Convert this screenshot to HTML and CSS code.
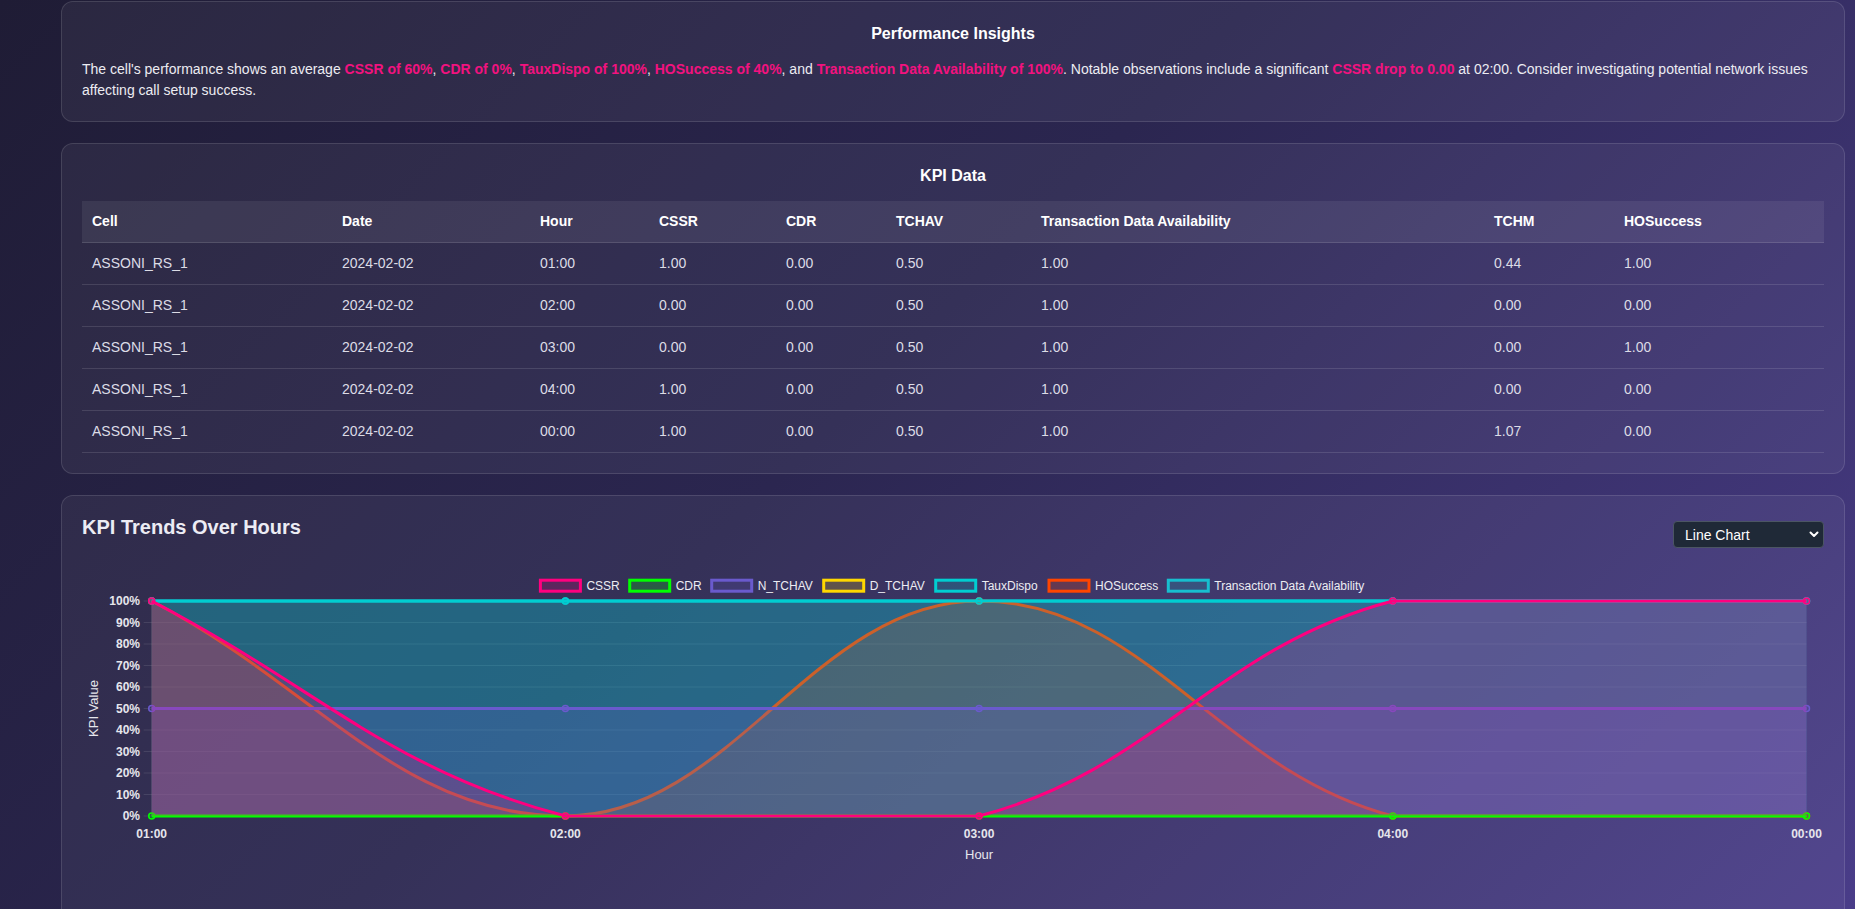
FILE: index.html
```html
<!DOCTYPE html>
<html lang="en">
<head>
<meta charset="utf-8">
<title>KPI Dashboard</title>
<link rel="stylesheet" href="styles.css">
</head>
<body>
<main class="page">
  <section class="card">
    <h3 class="card-title">Performance Insights</h3>
    <p class="insight-text">The cell's performance shows an average <span class="hl">CSSR of 60%</span>, <span class="hl">CDR of 0%</span>, <span class="hl">TauxDispo of 100%</span>, <span class="hl">HOSuccess of 40%</span>, and <span class="hl">Transaction Data Availability of 100%</span>. Notable observations include a significant <span class="hl">CSSR drop to 0.00</span> at 02:00. Consider investigating potential network issues affecting call setup success.</p>
  </section>

  <section class="card">
    <h3 class="card-title">KPI Data</h3>
    <table class="kpi-table">
      <colgroup>
        <col class="c-cell"><col class="c-date"><col class="c-hour"><col class="c-cssr"><col class="c-cdr"><col class="c-tchav"><col class="c-tda"><col class="c-tchm"><col class="c-ho">
      </colgroup>
      <thead>
        <tr><th>Cell</th><th>Date</th><th>Hour</th><th>CSSR</th><th>CDR</th><th>TCHAV</th><th>Transaction Data Availability</th><th>TCHM</th><th>HOSuccess</th></tr>
      </thead>
      <tbody>
        <tr><td>ASSONI_RS_1</td><td>2024-02-02</td><td>01:00</td><td>1.00</td><td>0.00</td><td>0.50</td><td>1.00</td><td>0.44</td><td>1.00</td></tr>
        <tr><td>ASSONI_RS_1</td><td>2024-02-02</td><td>02:00</td><td>0.00</td><td>0.00</td><td>0.50</td><td>1.00</td><td>0.00</td><td>0.00</td></tr>
        <tr><td>ASSONI_RS_1</td><td>2024-02-02</td><td>03:00</td><td>0.00</td><td>0.00</td><td>0.50</td><td>1.00</td><td>0.00</td><td>1.00</td></tr>
        <tr><td>ASSONI_RS_1</td><td>2024-02-02</td><td>04:00</td><td>1.00</td><td>0.00</td><td>0.50</td><td>1.00</td><td>0.00</td><td>0.00</td></tr>
        <tr><td>ASSONI_RS_1</td><td>2024-02-02</td><td>00:00</td><td>1.00</td><td>0.00</td><td>0.50</td><td>1.00</td><td>1.07</td><td>0.00</td></tr>
      </tbody>
    </table>
  </section>

  <section class="card chart-card">
    <div class="chart-header">
      <h2 class="chart-title">KPI Trends Over Hours</h2>
      <div class="select-wrap">
        <select class="chart-select"><option>Line Chart</option><option>Bar Chart</option></select>
        <svg class="select-arrow" width="10" height="7" viewBox="0 0 10 7"><path d="M1.5 1.5 L5 5 L8.5 1.5" fill="none" stroke="#ffffff" stroke-width="2" stroke-linecap="round" stroke-linejoin="round"/></svg>
      </div>
    </div>
    <div class="chart-wrap">
      <svg class="chart" width="1742" height="330" viewBox="0 0 1742 330">
        <g class="legend">
          <rect x="458.4" y="12.2" width="40" height="11" fill="rgba(255,0,127,0.2)" stroke="#ff007f" stroke-width="3"/>
          <text x="504.4" y="22.3">CSSR</text>
          <rect x="547.7" y="12.2" width="40" height="11" fill="rgba(0,255,0,0.2)" stroke="#00ff00" stroke-width="3"/>
          <text x="593.7" y="22.3">CDR</text>
          <rect x="629.7" y="12.2" width="40" height="11" fill="rgba(106,90,205,0.2)" stroke="#6a5acd" stroke-width="3"/>
          <text x="675.7" y="22.3">N_TCHAV</text>
          <rect x="741.7" y="12.2" width="40" height="11" fill="rgba(255,215,0,0.2)" stroke="#ffd700" stroke-width="3"/>
          <text x="787.7" y="22.3">D_TCHAV</text>
          <rect x="853.7" y="12.2" width="40" height="11" fill="rgba(0,206,209,0.2)" stroke="#00ced1" stroke-width="3"/>
          <text x="899.7" y="22.3">TauxDispo</text>
          <rect x="967" y="12.2" width="40" height="11" fill="rgba(255,69,0,0.2)" stroke="#ff4500" stroke-width="3"/>
          <text x="1013" y="22.3">HOSuccess</text>
          <rect x="1086.3" y="12.2" width="40" height="11" fill="rgba(23,190,207,0.2)" stroke="#17becf" stroke-width="3"/>
          <text x="1132.3" y="22.3">Transaction Data Availability</text>
        </g>

        <g class="grid">
          <line x1="61.7" y1="33" x2="1724.5" y2="33"/>
          <line x1="61.7" y1="54.5" x2="1724.5" y2="54.5"/>
          <line x1="61.7" y1="76" x2="1724.5" y2="76"/>
          <line x1="61.7" y1="97.5" x2="1724.5" y2="97.5"/>
          <line x1="61.7" y1="119" x2="1724.5" y2="119"/>
          <line x1="61.7" y1="140.5" x2="1724.5" y2="140.5"/>
          <line x1="61.7" y1="162" x2="1724.5" y2="162"/>
          <line x1="61.7" y1="183.5" x2="1724.5" y2="183.5"/>
          <line x1="61.7" y1="205" x2="1724.5" y2="205"/>
          <line x1="61.7" y1="226.5" x2="1724.5" y2="226.5"/>
          <line x1="61.7" y1="248" x2="1724.5" y2="248"/>
          <line x1="69.7" y1="33" x2="69.7" y2="248"/>
        </g>

        <g class="ticks ticks-y">
          <text x="58" y="37.3">100%</text>
          <text x="58" y="58.8">90%</text>
          <text x="58" y="80.3">80%</text>
          <text x="58" y="101.8">70%</text>
          <text x="58" y="123.3">60%</text>
          <text x="58" y="144.8">50%</text>
          <text x="58" y="166.3">40%</text>
          <text x="58" y="187.8">30%</text>
          <text x="58" y="209.3">20%</text>
          <text x="58" y="230.8">10%</text>
          <text x="58" y="252.3">0%</text>
        </g>

        <g class="ticks ticks-x">
          <text x="69.7" y="270">01:00</text>
          <text x="483.4" y="270">02:00</text>
          <text x="897.1" y="270">03:00</text>
          <text x="1310.8" y="270">04:00</text>
          <text x="1724.5" y="270">00:00</text>
        </g>

        <text class="axis-title" x="897.1" y="290.5" text-anchor="middle">Hour</text>
        <text class="axis-title" transform="translate(15.8 140.5) rotate(-90)" text-anchor="middle">KPI Value</text>

        <rect x="69.7" y="33" width="1654.8" height="215" fill="rgba(23,190,207,0.2)"/>
        <line x1="69.7" y1="33" x2="1724.5" y2="33" stroke="#17becf" stroke-width="3"/>
        <g fill="rgba(23,190,207,0.2)" stroke="#17becf" stroke-width="1.5">
          <circle cx="69.7" cy="33" r="3"/><circle cx="483.4" cy="33" r="3"/><circle cx="897.1" cy="33" r="3"/><circle cx="1310.8" cy="33" r="3"/><circle cx="1724.5" cy="33" r="3"/>
        </g>

        <path d="M69.7,33 C235.2,119 317.9,248 483.4,248 C648.9,248 731.6,33 897.1,33 C1062.6,33 1135.5,202.4 1310.8,248 C1466.4,248 1559,248 1724.5,248 L69.7,248 Z" fill="rgba(255,69,0,0.2)"/>
        <path d="M69.7,33 C235.2,119 317.9,248 483.4,248 C648.9,248 731.6,33 897.1,33 C1062.6,33 1135.5,202.4 1310.8,248 C1466.4,248 1559,248 1724.5,248" fill="none" stroke="#ff4500" stroke-width="3"/>
        <g fill="rgba(255,69,0,0.2)" stroke="#ff4500" stroke-width="1.5">
          <circle cx="69.7" cy="33" r="3"/><circle cx="483.4" cy="248" r="3"/><circle cx="897.1" cy="33" r="3"/><circle cx="1310.8" cy="248" r="3"/><circle cx="1724.5" cy="248" r="3"/>
        </g>

        <rect x="69.7" y="33" width="1654.8" height="215" fill="rgba(0,206,209,0.2)"/>
        <line x1="69.7" y1="33" x2="1724.5" y2="33" stroke="#00ced1" stroke-width="3"/>
        <g fill="rgba(0,206,209,0.2)" stroke="#00ced1" stroke-width="1.5">
          <circle cx="69.7" cy="33" r="3"/><circle cx="483.4" cy="33" r="3"/><circle cx="897.1" cy="33" r="3"/><circle cx="1310.8" cy="33" r="3"/><circle cx="1724.5" cy="33" r="3"/>
        </g>

        <rect x="69.7" y="140.5" width="1654.8" height="107.5" fill="rgba(106,90,205,0.2)"/>
        <line x1="69.7" y1="140.5" x2="1724.5" y2="140.5" stroke="#6a5acd" stroke-width="3"/>
        <g fill="rgba(106,90,205,0.2)" stroke="#6a5acd" stroke-width="1.5">
          <circle cx="69.7" cy="140.5" r="3"/><circle cx="483.4" cy="140.5" r="3"/><circle cx="897.1" cy="140.5" r="3"/><circle cx="1310.8" cy="140.5" r="3"/><circle cx="1724.5" cy="140.5" r="3"/>
        </g>

        <line x1="69.7" y1="248" x2="1724.5" y2="248" stroke="#00ff00" stroke-width="3"/>
        <g fill="rgba(0,255,0,0.2)" stroke="#00ff00" stroke-width="1.5">
          <circle cx="69.7" cy="248" r="3"/><circle cx="483.4" cy="248" r="3"/><circle cx="897.1" cy="248" r="3"/><circle cx="1310.8" cy="248" r="3"/><circle cx="1724.5" cy="248" r="3"/>
        </g>

        <path d="M69.7,33 C235.2,119 308.1,202.4 483.4,248 C639,248 741.5,248 897.1,248 C1072.4,202.4 1135.5,78.6 1310.8,33 C1466.4,33 1559,33 1724.5,33 L1724.5,248 L69.7,248 Z" fill="rgba(255,0,127,0.2)"/>
        <path d="M69.7,33 C235.2,119 308.1,202.4 483.4,248 C639,248 741.5,248 897.1,248 C1072.4,202.4 1135.5,78.6 1310.8,33 C1466.4,33 1559,33 1724.5,33" fill="none" stroke="#ff007f" stroke-width="3"/>
        <g fill="rgba(255,0,127,0.2)" stroke="#ff007f" stroke-width="1.5">
          <circle cx="69.7" cy="33" r="3"/><circle cx="483.4" cy="248" r="3"/><circle cx="897.1" cy="248" r="3"/><circle cx="1310.8" cy="33" r="3"/><circle cx="1724.5" cy="33" r="3"/>
        </g>
      </svg>
    </div>
  </section>
</main>
</body>
</html>
```

FILE: styles.css
```css
html, body {
  margin: 0;
  padding: 0;
}

body {
  font-family: "Liberation Sans", Arial, sans-serif;
  color: #e6e6ee;
  background: linear-gradient(135deg, #1f1c35 0%, #2b2650 45%, #4a3d8a 100%);
  min-height: 100vh;
}

.page {
  display: flex;
  flex-direction: column;
  gap: 21px;
  padding: 1px 10px 0 61px;
}

.card {
  background: rgba(255, 255, 255, 0.05);
  border: 1px solid rgba(255, 255, 255, 0.12);
  border-radius: 12px;
  padding: 20px;
}

.card-title {
  margin: 0 0 13px;
  font-size: 16px;
  line-height: 24px;
  font-weight: bold;
  text-align: center;
  color: #ffffff;
}

.insight-text {
  margin: 0;
  font-size: 14px;
  line-height: 21px;
  color: #ececf2;
}

.hl {
  color: #f2127f;
  font-weight: bold;
}

.kpi-table {
  width: 100%;
  border-collapse: collapse;
  table-layout: fixed;
  font-size: 14px;
  line-height: 17px;
}

.c-cell { width: 250px; }
.c-date { width: 198px; }
.c-hour { width: 119px; }
.c-cssr { width: 127px; }
.c-cdr { width: 110px; }
.c-tchav { width: 145px; }
.c-tda { width: 453px; }
.c-tchm { width: 130px; }
.c-ho { width: 210px; }

.kpi-table th,
.kpi-table td {
  padding: 12px 10px;
  text-align: left;
  border-bottom: 1px solid rgba(255, 255, 255, 0.12);
  white-space: nowrap;
}

.kpi-table th {
  font-weight: bold;
  color: #ffffff;
  background: rgba(255, 255, 255, 0.07);
}

.kpi-table td {
  color: #dcdce6;
}

.chart-card {
  padding-bottom: 40px;
}

.chart-header {
  display: flex;
  justify-content: space-between;
  align-items: flex-start;
}

.chart-title {
  margin: 0;
  font-size: 20px;
  line-height: 23px;
  font-weight: bold;
  color: #ececf4;
}

.select-wrap {
  position: relative;
  margin-top: 5px;
}

.chart-select {
  appearance: none;
  -webkit-appearance: none;
  width: 151px;
  height: 27px;
  padding: 0 24px 0 11px;
  background: #1f2937;
  color: #ffffff;
  border: 1px solid #4b5563;
  border-radius: 4px;
  font-family: "Liberation Sans", Arial, sans-serif;
  font-size: 14px;
  display: block;
}

.select-arrow {
  position: absolute;
  right: 5px;
  top: 10px;
  pointer-events: none;
}

.chart-wrap {
  margin-top: 20px;
}

.chart {
  display: block;
  font-family: "Liberation Sans", Arial, sans-serif;
}

.legend text {
  font-size: 12px;
  fill: #ececf2;
}

.grid line {
  stroke: rgba(255, 255, 255, 0.1);
  stroke-width: 1;
}

.ticks text {
  font-size: 12px;
  font-weight: bold;
  fill: #e6e6ec;
}

.ticks-y text {
  text-anchor: end;
}

.ticks-x text {
  text-anchor: middle;
}

.axis-title {
  font-size: 13px;
  fill: #e6e6ec;
}
```
